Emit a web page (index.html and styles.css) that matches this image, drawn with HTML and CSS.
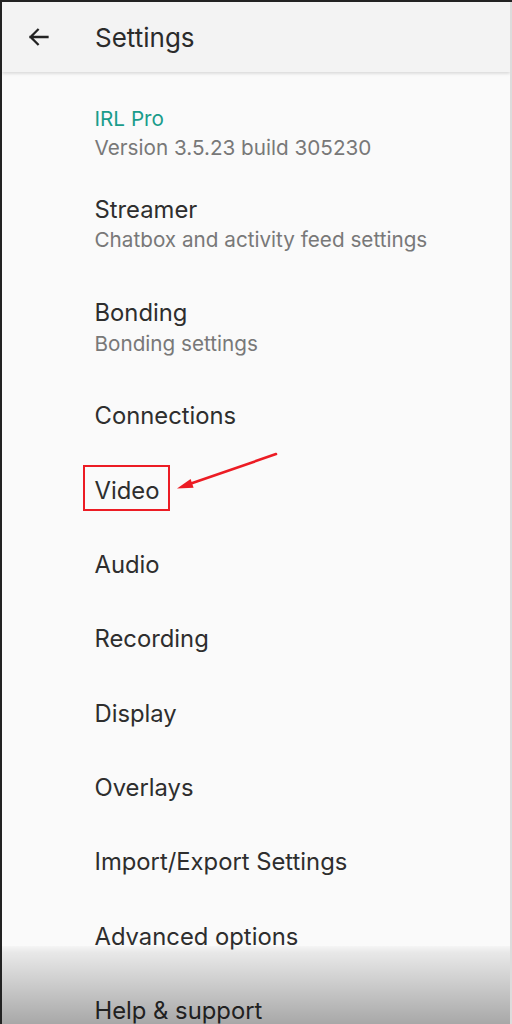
FILE: index.html
```html
<!DOCTYPE html>
<html lang="en">
<head>
<meta charset="utf-8">
<title>Settings</title>
<link rel="stylesheet" href="styles.css">
</head>
<body>
<div class="screen">
  <header class="appbar">
    <svg class="back" width="24" height="24" viewBox="0 0 24 24" aria-hidden="true">
      <path d="M21.5 12H4.5M11.8 4.8 4.6 12l7.2 7.2" fill="none" stroke="#222" stroke-width="2.3" stroke-linecap="square"/>
    </svg>
    <h1 class="title">Settings</h1>
  </header>
  <main class="list">
    <div class="item app">
      <div class="item-title accent">IRL Pro</div>
      <div class="item-sub">Version 3.5.23 build 305230</div>
    </div>
    <div class="item two">
      <div class="item-title">Streamer</div>
      <div class="item-sub">Chatbox and activity feed settings</div>
    </div>
    <div class="item two">
      <div class="item-title">Bonding</div>
      <div class="item-sub">Bonding settings</div>
    </div>
    <div class="item"><div class="item-title">Connections</div></div>
    <div class="item">
      <div class="item-title"><span class="highlight">Video</span></div>
      <svg class="pointer" width="110" height="40" viewBox="0 0 110 40" aria-hidden="true">
        <line x1="106" y1="2.1" x2="21" y2="31.6" stroke="#ec1c24" stroke-width="2.6" stroke-linecap="round"/>
        <polygon points="7,36.6 20.6,27.1 23.6,35.7" fill="#ec1c24"/>
      </svg>
    </div>
    <div class="item"><div class="item-title">Audio</div></div>
    <div class="item"><div class="item-title">Recording</div></div>
    <div class="item"><div class="item-title">Display</div></div>
    <div class="item"><div class="item-title">Overlays</div></div>
    <div class="item"><div class="item-title">Import/Export Settings</div></div>
    <div class="item"><div class="item-title">Advanced options</div></div>
    <div class="item"><div class="item-title">Help &amp; support</div></div>
  </main>
  <div class="fade"></div>
</div>
</body>
</html>
```
FILE: styles.css
```css
html, body {
  margin: 0;
  padding: 0;
  background: #222;
}
.screen {
  position: relative;
  width: 508px;
  height: 1022px;
  margin-top: 2px;
  margin-left: 2px;
  background: #fafafa;
  border-right: 2px solid #dcdcdc;
  overflow: hidden;
  font-family: Inter, Roboto, sans-serif;
}
.appbar {
  height: 70px;
  background: #f3f3f3;
  display: flex;
  align-items: center;
  box-shadow: 0 1px 4px rgba(0,0,0,0.12), 0 2px 2px rgba(0,0,0,0.04);
  position: relative;
  z-index: 1;
}
.back {
  margin-left: 23.5px;
  margin-top: -1px;
}
.title {
  margin: 0 0 0 45.5px;
  padding-top: 1.6px;
  font-weight: 400;
  font-size: 26px;
  line-height: 32px;
  color: #2b2b2b;
}
.item {
  position: relative;
  padding: 23.2px 0 23.2px 92.5px;
}
.item.two {
  padding-bottom: 23.25px;
}
.item.app {
  padding-top: 32.5px;
  padding-bottom: 13px;
}
.item-title {
  font-size: 23.8px;
  line-height: 28px;
  color: #2e2e2e;
}
.item-title.accent {
  font-size: 20.7px;
  color: #1a9c8b;
}
.item-sub {
  margin-top: 4.8px;
  font-size: 20.7px;
  line-height: 24px;
  color: #787878;
}
.app .item-sub { margin-top: 3px; }
.highlight {
  display: inline-block;
  margin: -11.6px 0 -6.4px -11.5px;
  padding: 9.6px 9px 4.4px 9.5px;
  border: 2px solid #ec1c24;
}
.pointer {
  position: absolute;
  left: 168px;
  top: -1px;
}
.fade {
  position: absolute;
  left: 0;
  right: 0;
  bottom: 0;
  height: 78px;
  background: linear-gradient(rgba(0,0,0,0.02), rgba(0,0,0,0.07) 8%, rgba(0,0,0,0.33));
  pointer-events: none;
}
```
